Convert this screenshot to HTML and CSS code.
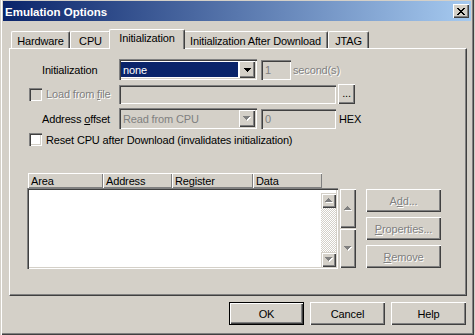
FILE: index.html
```html
<!DOCTYPE html>
<html lang="en">
<head>
    <meta charset="UTF-8">
    <title>Emulation Options</title>
    <link rel="stylesheet" href="styles.css">
</head>
<body>
    <div class="window">
        <div class="titlebar">
            <span class="title">Emulation Options</span>
            <button class="close-btn">
                <svg width="8" height="7" viewBox="0 0 8 7" shape-rendering="crispEdges"><path d="M0 0h2v1h-2zM6 0h2v1h-2zM1 1h2v1h-2zM5 1h2v1h-2zM2 2h4v1h-4zM3 3h2v1h-2zM2 4h4v1h-4zM1 5h2v1h-2zM5 5h2v1h-2zM0 6h2v1h-2zM6 6h2v1h-2z" fill="#000"/></svg>
            </button>
        </div>

        <div class="tabs">
            <div class="tab tab-hw">Hardware</div>
            <div class="tab tab-cpu">CPU</div>
            <div class="tab tab-init active">Initialization</div>
            <div class="tab tab-after">Initialization After Download</div>
            <div class="tab tab-jtag">JTAG</div>
        </div>

        <div class="panel">
            <div class="form">
                <div class="row row-init">
                    <span class="lead label"><span>Initialization</span></span>
                    <div class="combo">
                        <span class="combo-value selected">none</span>
                        <span class="combo-btn">
                            <svg width="7" height="4" viewBox="0 0 7 4" shape-rendering="crispEdges"><path d="M0 0h7v1h-1v1h-1v1h-1v1h-1v-1h-1v-1h-1v-1h-1z" fill="#000"/></svg>
                        </span>
                    </div>
                    <div class="field off field-sec">1</div>
                    <span class="dis unit">second(s)</span>
                </div>

                <div class="row row-file">
                    <span class="lead">
                        <span class="check off"></span>
                        <span class="dis">Load from <u>f</u>ile</span>
                    </span>
                    <div class="field off field-file"></div>
                    <button class="btn browse">...</button>
                </div>

                <div class="row row-offset">
                    <span class="lead label"><span>Address <u>o</u>ffset</span></span>
                    <div class="combo off">
                        <span class="combo-value">Read from CPU</span>
                        <span class="combo-btn">
                            <svg width="8" height="5" viewBox="0 0 8 5" shape-rendering="crispEdges"><path transform="translate(1 1)" d="M0 0h7v1h-1v1h-1v1h-1v1h-1v-1h-1v-1h-1v-1h-1z" fill="#fff"/><path d="M0 0h7v1h-1v1h-1v1h-1v1h-1v-1h-1v-1h-1v-1h-1z" fill="#808080"/></svg>
                        </span>
                    </div>
                    <div class="field off field-off">0</div>
                    <span class="unit hex">HEX</span>
                </div>

                <div class="row row-reset">
                    <span class="check"></span>
                    <span class="reset-text">Reset CPU after Download (invalidates initialization)</span>
                </div>
            </div>

            <div class="list-area">
                <div class="list">
                    <div class="list-head">
                        <span class="col col-area">Area</span>
                        <span class="col col-addr">Address</span>
                        <span class="col col-reg">Register</span>
                        <span class="col col-data">Data</span>
                    </div>
                    <div class="list-body">
                        <div class="list-rows"></div>
                        <div class="scrollbar">
                            <span class="sb-btn">
                                <svg width="8" height="5" viewBox="0 0 8 5" shape-rendering="crispEdges"><path transform="translate(1 1)" d="M3 0h1v1h1v1h1v1h1v1h-7v-1h1v-1h1v-1h1z" fill="#fff"/><path d="M3 0h1v1h1v1h1v1h1v1h-7v-1h1v-1h1v-1h1z" fill="#808080"/></svg>
                            </span>
                            <span class="sb-track"></span>
                            <span class="sb-btn">
                                <svg width="8" height="5" viewBox="0 0 8 5" shape-rendering="crispEdges"><path transform="translate(1 1)" d="M0 0h7v1h-1v1h-1v1h-1v1h-1v-1h-1v-1h-1v-1h-1z" fill="#fff"/><path d="M0 0h7v1h-1v1h-1v1h-1v1h-1v-1h-1v-1h-1v-1h-1z" fill="#808080"/></svg>
                            </span>
                        </div>
                    </div>
                </div>

                <div class="updown">
                    <button class="btn spin">
                        <svg width="8" height="5" viewBox="0 0 8 5" shape-rendering="crispEdges"><path transform="translate(1 1)" d="M3 0h1v1h1v1h1v1h1v1h-7v-1h1v-1h1v-1h1z" fill="#fff"/><path d="M3 0h1v1h1v1h1v1h1v1h-7v-1h1v-1h1v-1h1z" fill="#808080"/></svg>
                    </button>
                    <button class="btn spin">
                        <svg width="8" height="5" viewBox="0 0 8 5" shape-rendering="crispEdges"><path transform="translate(1 1)" d="M0 0h7v1h-1v1h-1v1h-1v1h-1v-1h-1v-1h-1v-1h-1z" fill="#fff"/><path d="M0 0h7v1h-1v1h-1v1h-1v1h-1v-1h-1v-1h-1v-1h-1z" fill="#808080"/></svg>
                    </button>
                </div>

                <div class="actions">
                    <button class="btn action dis">A<u>d</u>d...</button>
                    <button class="btn action dis"><u>P</u>roperties...</button>
                    <button class="btn action dis"><u>R</u>emove</button>
                </div>
            </div>
        </div>

        <div class="footer">
            <button class="btn push default">OK</button>
            <button class="btn push">Cancel</button>
            <button class="btn push">Help</button>
        </div>
    </div>
</body>
</html>
```

FILE: styles.css
```css
* {
    margin: 0;
    padding: 0;
    box-sizing: border-box;
}

body {
    font-family: "Liberation Sans", Arial, sans-serif;
    font-size: 11px;
    letter-spacing: -0.15px;
    color: #000;
    background: #d4d0c8;
}

button {
    font: inherit;
    letter-spacing: inherit;
    color: inherit;
    border: none;
    background: #d4d0c8;
}

u {
    text-decoration: underline;
    text-underline-offset: 1px;
}

.window {
    width: 474px;
    height: 335px;
    padding: 1px 3px 0 3px;
    background: #d4d0c8;
    box-shadow: inset 1px 0 #d4d0c8, inset 2px 0 #fff, inset -1px -1px #404040, inset -2px -2px #808080;
}

/* title bar */
.titlebar {
    display: flex;
    align-items: center;
    height: 20px;
    padding-left: 2px;
    background: linear-gradient(to right, #0a246a, #a6caf0);
    color: #fff;
}

.title {
    flex: 1;
    font-size: 11.5px;
    font-weight: bold;
    letter-spacing: 0;
    padding-top: 1px;
}

.close-btn {
    width: 16px;
    height: 14px;
    margin-right: 2px;
    display: flex;
    align-items: center;
    justify-content: center;
    box-shadow: inset 1px 1px #fff, inset -1px -1px #404040, inset -2px -2px #808080;
}

/* tabs */
.tabs {
    display: flex;
    align-items: flex-end;
    height: 19px;
    margin: 8px 0 0 6px;
    padding-left: 2px;
}

.tab {
    height: 17px;
    display: flex;
    align-items: center;
    justify-content: center;
    padding-top: 1px;
    border-top: 1px solid #fff;
    border-left: 1px solid #fff;
    border-right: 1px solid #404040;
    border-radius: 2px 2px 0 0;
    box-shadow: inset -1px 0 #808080;
    background: #d4d0c8;
    white-space: nowrap;
}

.tab-hw { width: 59px; }
.tab-cpu { width: 41px; }
.tab-init { width: 72px; }
.tab-after { width: 145px; }
.tab-jtag { width: 41px; }

.tab.active {
    width: 76px;
    height: 20px;
    margin: 0 -2px -1px;
    padding: 0 0 3px;
    position: relative;
    z-index: 1;
}

/* panel */
.panel {
    width: 458px;
    height: 248px;
    margin-left: 6px;
    padding: 10px 0 0 19px;
    border: 1px solid;
    border-color: #fff #404040 #404040 #fff;
    box-shadow: inset -1px -1px #808080;
}

.form {
    display: flex;
    flex-direction: column;
    gap: 4px;
}

.row {
    display: flex;
    align-items: center;
}

.row-init { height: 21px; }
.row-file { height: 20px; }
.row-offset { height: 21px; }
.row-reset { height: 13px; }

.lead {
    width: 90px;
    display: flex;
    align-items: center;
    gap: 4px;
}

.label {
    padding-left: 13px;
}

.dis {
    color: #808080;
    text-shadow: 1px 1px #fff;
}

.check {
    width: 13px;
    height: 13px;
    flex-shrink: 0;
    background: #fff;
    box-shadow: inset 1px 1px #808080, inset 2px 2px #404040, inset -1px -1px #fff, inset -2px -2px #d4d0c8;
}

.check.off {
    background: #d4d0c8;
}

.row-reset .check {
    margin-right: 4px;
}

/* inputs */
.field {
    height: 20px;
    display: flex;
    align-items: center;
    padding: 0 4px;
    background: #fff;
    box-shadow: inset 1px 1px #808080, inset 2px 2px #404040, inset -1px -1px #fff, inset -2px -2px #d4d0c8;
}

.field.off {
    background: #d4d0c8;
    color: #808080;
}

.field-sec {
    width: 30px;
    margin-left: 4px;
}

.field-file {
    width: 217px;
    height: 19px;
}

.field-off {
    width: 75px;
    margin-left: 4px;
}

.unit {
    margin-left: 2px;
}

.hex {
    margin-left: 3px;
}

.combo {
    width: 138px;
    height: 21px;
    display: flex;
    padding: 2px;
    background: #fff;
    box-shadow: inset 1px 1px #808080, inset 2px 2px #404040, inset -1px -1px #fff, inset -2px -2px #d4d0c8;
}

.combo.off {
    background: #d4d0c8;
    color: #808080;
}

.combo-value {
    flex: 1;
    display: flex;
    align-items: center;
    padding-left: 2px;
    margin: 1px 1px 1px 0;
}

.combo-value.selected {
    background: #0a246a;
    color: #fff;
}

.combo-btn {
    width: 16px;
    display: flex;
    align-items: center;
    justify-content: center;
    background: #d4d0c8;
    box-shadow: inset 1px 1px #fff, inset -1px -1px #404040, inset -2px -2px #808080;
}

.btn {
    display: flex;
    align-items: center;
    justify-content: center;
    box-shadow: inset 1px 1px #fff, inset -1px -1px #404040, inset -2px -2px #808080;
}

.browse {
    width: 17px;
    height: 20px;
    margin-left: 2px;
    padding-bottom: 3px;
}

/* list */
.list-area {
    display: flex;
    margin: 27px 0 0 -2px;
}

.list {
    width: 311px;
}

.list-head {
    display: flex;
    width: 294px;
    height: 15px;
    margin-left: 1px;
}

.col {
    display: flex;
    align-items: center;
    padding-left: 3px;
    box-shadow: inset 1px 1px #fff, inset -1px -1px #808080;
}

.col-area { width: 75px; }
.col-addr { width: 69px; }
.col-reg { width: 81px; }
.col-data { width: 69px; }

.list-body {
    height: 81px;
    display: flex;
    padding: 2px;
    background: #fff;
    box-shadow: inset 1px 1px #808080, inset 2px 2px #404040, inset -1px -1px #fff, inset -2px -2px #d4d0c8;
}

.list-rows {
    flex: 1;
}

.scrollbar {
    width: 15px;
    display: flex;
    flex-direction: column;
    margin: 3px 0 0;
}

.sb-btn {
    height: 15px;
    display: flex;
    align-items: center;
    justify-content: center;
    background: #d4d0c8;
    box-shadow: inset 1px 1px #d4d0c8, inset 2px 2px #fff, inset -1px -1px #404040, inset -2px -2px #808080;
}

.sb-track {
    flex: 1;
    background: conic-gradient(#fff 25%, #d4d0c8 0 50%, #fff 0 75%, #d4d0c8 0);
    background-size: 2px 2px;
}

.updown {
    display: flex;
    flex-direction: column;
    gap: 1px;
    margin-left: 2px;
    padding-top: 16px;
}

.spin {
    width: 16px;
    height: 39px;
}

.actions {
    display: flex;
    flex-direction: column;
    gap: 5px;
    margin-left: 10px;
    padding-top: 16px;
}

.action {
    width: 75px;
    height: 23px;
}

/* footer */
.footer {
    display: flex;
    justify-content: flex-end;
    gap: 6px;
    margin-top: 6px;
    padding-right: 5px;
}

.push {
    width: 75px;
    height: 23px;
}

.push.default {
    border: 1px solid #000;
}
```
